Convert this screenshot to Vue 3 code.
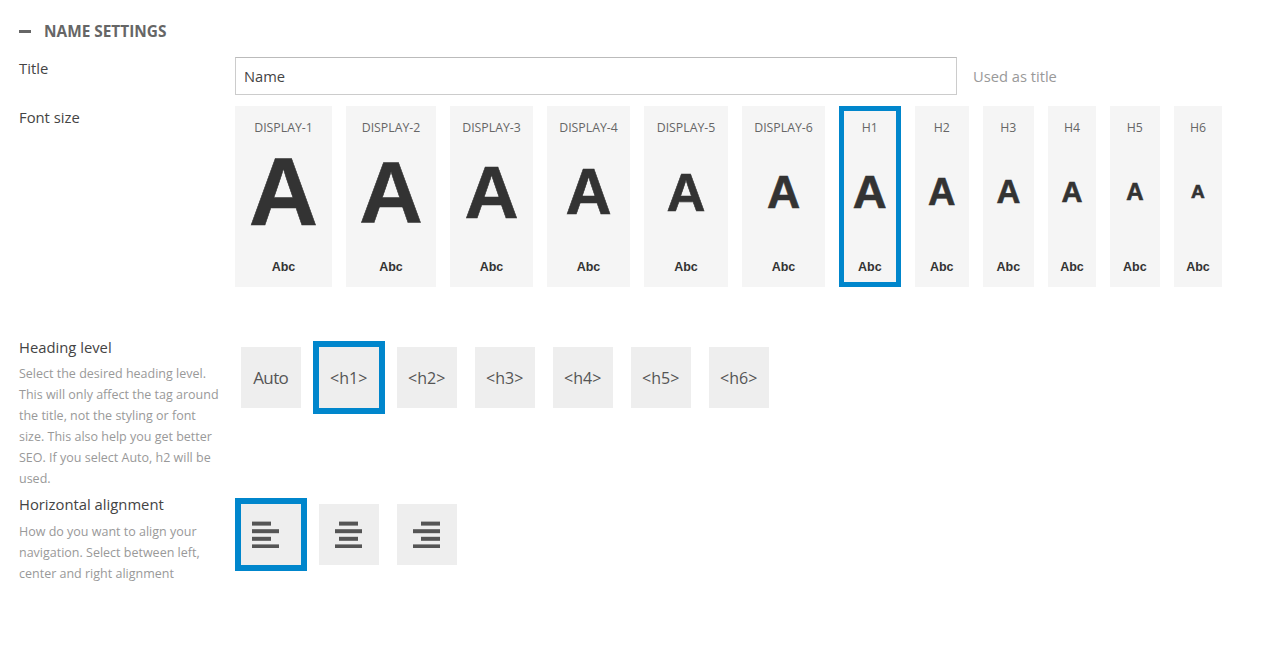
<script setup>
import { ref } from 'vue'

const sizes = [
  { label: 'DISPLAY-1', size: 96, width: 97 },
  { label: 'DISPLAY-2', size: 88, width: 90 },
  { label: 'DISPLAY-3', size: 75, width: 83 },
  { label: 'DISPLAY-4', size: 64, width: 83 },
  { label: 'DISPLAY-5', size: 54, width: 84 },
  { label: 'DISPLAY-6', size: 46, width: 83 },
  { label: 'H1', size: 47, width: 61.7 },
  { label: 'H2', size: 38, width: 54 },
  { label: 'H3', size: 33, width: 51.3 },
  { label: 'H4', size: 29, width: 48 },
  { label: 'H5', size: 24, width: 49.7 },
  { label: 'H6', size: 19, width: 48.6 }
]
const levels = ['Auto', '<h1>', '<h2>', '<h3>', '<h4>', '<h5>', '<h6>']
const aligns = [
  { name: 'left', bars: [[0, 19], [0, 27], [0, 19], [0, 27]] },
  { name: 'center', bars: [[4, 19], [0, 27], [4, 19], [0, 27]] },
  { name: 'right', bars: [[8, 19], [0, 27], [8, 19], [0, 27]] }
]

const activeSize = ref('H1')
const activeLevel = ref('<h1>')
const activeAlign = ref('left')
</script>

<template>
  <div class="page">
    <div class="section-head">
      <span class="minus"></span>
      <span>NAME SETTINGS</span>
    </div>

    <div class="row title-row">
      <label class="label">Title</label>
      <input class="title-input" type="text" value="Name" />
      <span class="hint">Used as title</span>
    </div>

    <div class="row size-row">
      <label class="label">Font size</label>
      <div class="cards">
        <div
          v-for="s in sizes"
          :key="s.label"
          class="card"
          :class="{ active: activeSize === s.label }"
          :style="{ width: s.width + 'px' }"
          @click="activeSize = s.label"
        >
          <div class="card-label">{{ s.label }}</div>
          <div class="card-big" :style="{ fontSize: s.size + 'px' }">A</div>
          <div class="card-abc">Abc</div>
        </div>
      </div>
    </div>

    <div class="row level-row">
      <div class="side">
        <div class="label">Heading level</div>
        <p class="desc">Select the desired heading level. This will only affect the tag around the title, not the styling or font size. This also help you get better SEO. If you select Auto, h2 will be used.</p>
      </div>
      <div class="buttons">
        <button
          v-for="l in levels"
          :key="l"
          class="opt"
          :class="{ active: activeLevel === l, auto: l === 'Auto' }"
          @click="activeLevel = l"
        >{{ l }}</button>
      </div>
    </div>

    <div class="row align-row">
      <div class="side">
        <div class="label">Horizontal alignment</div>
        <p class="desc">How do you want to align your navigation. Select between left, center and right alignment</p>
      </div>
      <div class="buttons">
        <button
          v-for="a in aligns"
          :key="a.name"
          class="opt"
          :class="{ active: activeAlign === a.name }"
          :aria-label="a.name"
          @click="activeAlign = a.name"
        >
          <svg :class="a.name" width="27" height="27" viewBox="0 0 27 27">
            <rect
              v-for="(b, i) in a.bars"
              :key="i"
              :x="b[0]"
              :y="0.6 + i * 7.6"
              :width="b[1]"
              height="4"
              fill="#555"
            />
          </svg>
        </button>
      </div>
    </div>
  </div>
</template>

<style scoped>
.page {
  width: 1280px;
  height: 657px;
  padding: 21px 0 0 19px;
  box-sizing: border-box;
  overflow: hidden;
  background: #fff;
  font-family: "Open Sans", "Noto Sans", sans-serif;
  color: #444;
}

.section-head {
  display: flex;
  align-items: center;
  gap: 13px;
  height: 20px;
  font-size: 15.4px;
  font-weight: 700;
  color: #666;
}

.minus {
  width: 12px;
  height: 3px;
  background: #666;
}

.row {
  display: flex;
}

.label {
  display: block;
  width: 216px;
  flex: none;
  font-size: 14.8px;
  line-height: 21px;
  color: #444;
}

.title-row {
  margin-top: 16px;
}

.title-row .label {
  margin-top: 1px;
}

.title-input {
  width: 722px;
  height: 38px;
  box-sizing: border-box;
  padding: 0 8px;
  border: 1px solid #ccc;
  border-top-color: #bbb;
  outline: none;
  font: inherit;
  font-size: 14.7px;
  color: #444;
}

.hint {
  margin-left: 16px;
  align-self: center;
  font-size: 14.7px;
  color: #999;
}

.size-row {
  margin-top: 11px;
}

.size-row .label {
  margin-top: 1px;
}

.cards {
  display: flex;
  gap: 14px;
}

.card {
  flex: none;
  height: 181px;
  box-sizing: border-box;
  display: flex;
  flex-direction: column;
  align-items: center;
  background: #f5f5f5;
  cursor: pointer;
}

.card.active {
  border: 5px solid #0086cc;
}

.card-label {
  height: 17px;
  margin-top: 13px;
  font-size: 12.3px;
  line-height: 17px;
  color: #666;
}

.card.active .card-label {
  margin-top: 8px;
}

.card-big {
  height: 110px;
  margin-top: 1px;
  font-family: "Liberation Sans", Arial, sans-serif;
  font-weight: 700;
  line-height: 110px;
  color: #333;
  -webkit-text-stroke: 0.6px #333;
}

.card-abc {
  margin-top: 12px;
  font-family: "Liberation Sans", Arial, sans-serif;
  font-size: 12.5px;
  font-weight: 700;
  line-height: 16px;
  color: #333;
}

.level-row {
  margin-top: 50px;
}

.align-row {
  margin-top: 5px;
}

.side {
  width: 216px;
  flex: none;
}

.desc {
  width: 204px;
  margin: 5px 0 0;
  font-size: 12.5px;
  line-height: 21px;
  color: #999;
}

.align-row .desc {
  margin-top: 6px;
}

.buttons {
  display: flex;
  align-items: flex-start;
  gap: 18px;
  padding: 10px 0 0 5.7px;
}

.opt {
  width: 60px;
  height: 61px;
  padding: 0;
  display: flex;
  align-items: center;
  justify-content: center;
  border: none;
  background: #eee;
  font-family: inherit;
  font-size: 16px;
  color: #555;
  cursor: pointer;
}

.opt.auto {
  font-size: 17px;
  letter-spacing: -0.6px;
}

.opt.active {
  outline: 6px solid #0086cc;
}

svg.left {
  margin-right: 11px;
}
</style>
